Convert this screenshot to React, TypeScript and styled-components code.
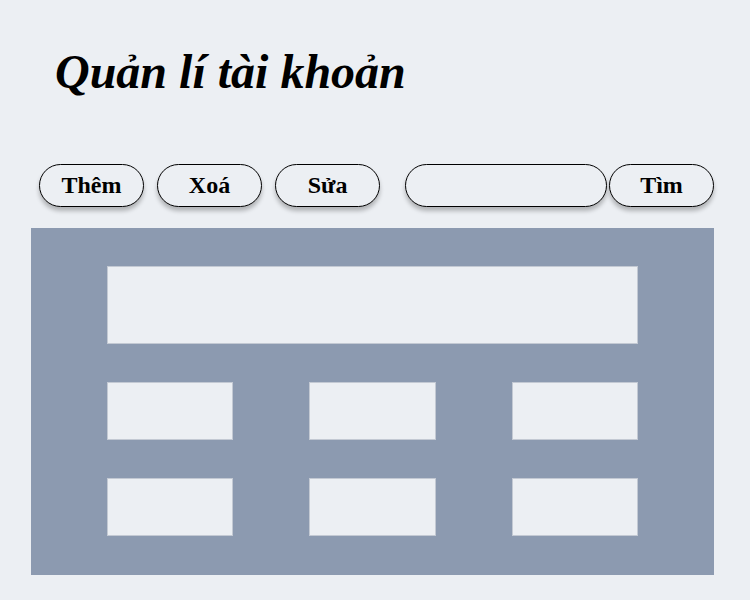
import styled, { createGlobalStyle } from "styled-components";

const GlobalStyle = createGlobalStyle`
  body {
    margin: 0;
    background-color: #eceff3;
    font-family: "Liberation Serif", "Times New Roman", serif;
  }
`;

const buttons = ["Thêm", "Xoá", "Sửa"];

export default function App() {
  return (
    <Page>
      <GlobalStyle />
      <Title>Quản lí tài khoản</Title>
      <Toolbar>
        <ActionGroup>
          {buttons.map((b) => (
            <PillButton key={b}>{b}</PillButton>
          ))}
        </ActionGroup>
        <SearchGroup>
          <SearchInput type="text" />
          <PillButton>Tìm</PillButton>
        </SearchGroup>
      </Toolbar>
      <Panel>
        <WideField />
        <FieldGrid>
          {[0, 1, 2, 3, 4, 5].map((i) => (
            <Field key={i} />
          ))}
        </FieldGrid>
      </Panel>
    </Page>
  );
}

const Page = styled.div`
  width: 750px;
  height: 600px;
  background-color: #eceff3;
`;

const Title = styled.h1`
  margin: 0;
  padding: 44px 0 0 55px;
  font-size: 48px;
  font-style: italic;
  font-weight: bold;
  line-height: 55px;
  color: #000;
`;

const Toolbar = styled.div`
  display: flex;
  align-items: center;
  margin-top: 65px;
  padding-left: 39px;
  gap: 25px;
`;

const ActionGroup = styled.div`
  display: flex;
  gap: 13px;
`;

const SearchGroup = styled.div`
  display: flex;
  gap: 2px;
`;

const PillButton = styled.button`
  width: 105px;
  height: 43px;
  border: 1px solid #000;
  border-radius: 22px;
  background-color: #eceff3;
  box-shadow: 0 4px 4px rgba(0, 0, 0, 0.25);
  font-family: "Liberation Serif", "Times New Roman", serif;
  font-size: 24px;
  font-weight: bold;
  color: #000;
  padding: 0;
`;

const SearchInput = styled.input`
  box-sizing: border-box;
  width: 202px;
  height: 43px;
  border: 1px solid #000;
  border-radius: 22px;
  background-color: #eceff3;
  box-shadow: 0 4px 4px rgba(0, 0, 0, 0.25);
  padding: 0 16px;
  font-family: "Liberation Serif", "Times New Roman", serif;
  font-size: 18px;
  outline: none;
`;

const Panel = styled.div`
  box-sizing: border-box;
  width: 683px;
  height: 347px;
  margin: 21px 0 0 31px;
  padding: 38px 76px 0;
  background-color: #8c9ab0;
  display: flex;
  flex-direction: column;
  gap: 38px;
`;

const WideField = styled.div`
  height: 78px;
  background-color: #eceff3;
  border: 1px solid #c3c9d3;
  box-sizing: border-box;
`;

const FieldGrid = styled.div`
  display: grid;
  grid-template-columns: repeat(3, 1fr);
  column-gap: 76px;
  row-gap: 38px;
`;

const Field = styled.div`
  height: 58px;
  background-color: #eceff3;
  border: 1px solid #c3c9d3;
  box-sizing: border-box;
`;
